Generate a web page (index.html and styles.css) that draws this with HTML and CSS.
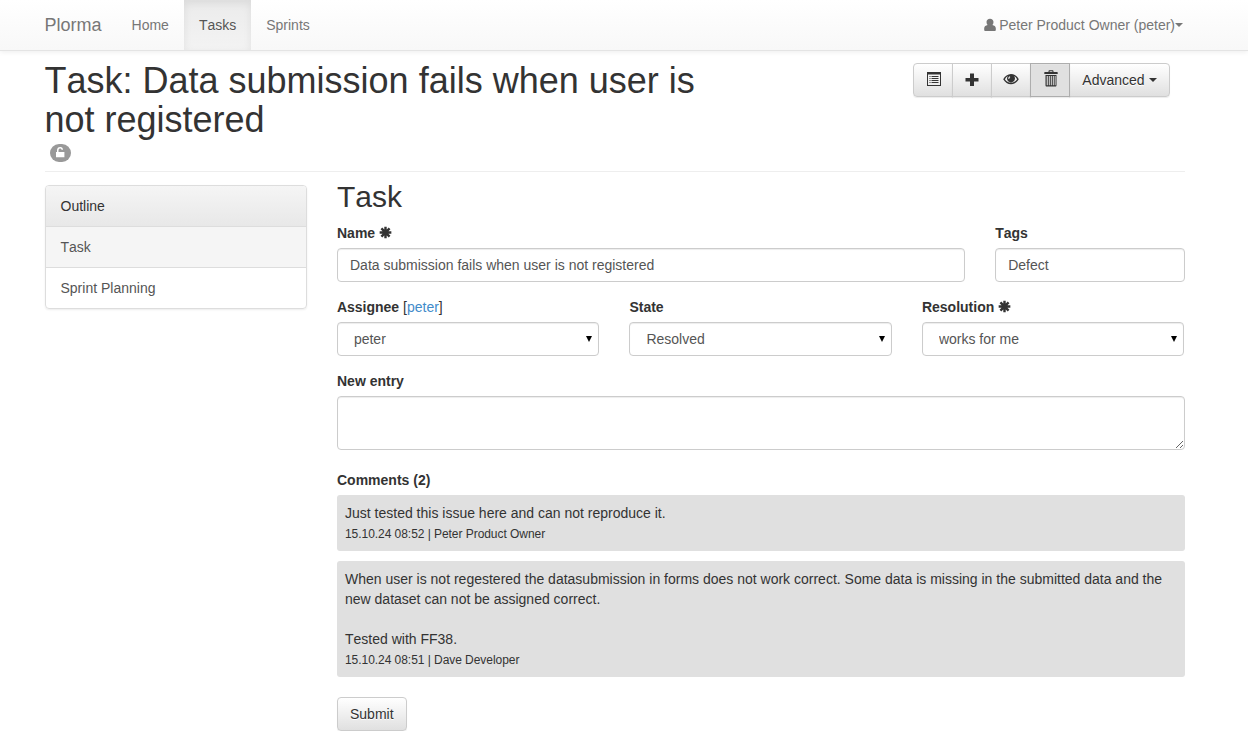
FILE: index.html
```html
<!DOCTYPE html>
<html lang="en">
<head>
<meta charset="utf-8">
<title>Plorma</title>
<link rel="stylesheet" href="styles.css">
</head>
<body>
<nav class="navbar">
  <div class="container navbar-inner">
    <a class="brand">Plorma</a>
    <a class="nav-link">Home</a>
    <a class="nav-link active">Tasks</a>
    <a class="nav-link">Sprints</a>
    <a class="nav-link user"><svg class="icon person" viewBox="0 0 12 14"><path d="M6 .7c2.100 0 3.500 1.300 3.500 3.200 0 1.300-.4 2.300-1.100 3 1.800.5 3.400 1.400 3.400 3.300V12c0 .6-.3 1-.9 1H1.100c-.6 0-.9-.4-.9-1v-1.800c0-1.900 1.600-2.800 3.400-3.300-.7-.7-1.100-1.700-1.100-3C2.500 2 3.900.7 6 .7z"/></svg> Peter Product Owner (peter)<b class="caret"></b></a>
  </div>
</nav>

<div class="container">
  <header class="page-header">
    <div class="heading">
      <h1>Task: Data submission fails when user is not registered</h1>
      <span class="badge"><svg class="icon" viewBox="0 0 12 12"><path d="M2 5h1V3.300C3 1.200 4.300 0 6.200 0S9 1.100 9 2.800H7.500C7.500 2 7 1.400 6.200 1.400s-1.700.6-1.700 1.900V5h5.900v5.300H2z"/></svg></span>
    </div>
    <div class="btn-group">
      <button class="btn"><svg class="icon raised" viewBox="0 0 14 14"><path fill-rule="evenodd" d="M0 0h14v14H0zM1 2.500V13h12V2.500z"/><path d="M2.500 4h1v1h-1zm2 0h7v1h-7zM2.500 6h1v1h-1zm2 0h7v1h-7zM2.500 8h1v1h-1zm2 0h7v1h-7zM2.500 10h1v1h-1zm2 0h7v1h-7z"/></svg></button>
      <button class="btn"><svg class="icon" viewBox="0 0 14 14"><path d="M5 .5h4V5h4.500v3.500H9V13H5V8.500H.5V5H5z"/></svg></button>
      <button class="btn"><svg class="icon" viewBox="0 0 14 14"><path fill-rule="evenodd" d="M-.8 6.200C1 3 3.800.9 7 .9s6 2.100 7.800 5.300C13 9.300 10.200 11.200 7 11.200S1 9.300-.8 6.200zm1.700 0C2.200 8.400 4.400 9.700 7 9.700s4.800-1.300 6.100-3.500c-.8-1.400-1.800-2.400-3-3.100.6.700.9 1.600.9 2.500 0 2.200-1.800 3.800-4 3.800S3 7.800 3 5.600c0-.9.3-1.800.9-2.500-1.200.7-2.200 1.700-3 3.100zM5.300 3.300c-.9.8-1.200 1.700-.9 2.800l1.200-.5c-.1-.8.200-1.300.8-1.700z"/></svg></button>
      <button class="btn pressed"><svg class="icon raised" viewBox="0 0 14 14"><path fill-rule="evenodd" d="M4.500 0V-.5c0-.8.400-1.200 1-1.200h3c.6 0 1 .4 1 1.200V0h3.700c.3 0 .5.300.5.600V2H.3V.6c0-.3.2-.6.500-.6zM5.600-.7V0h2.800v-.7zM1.500 3h11v10.200c0 .8-.4 1.300-1.200 1.300H2.700c-.8 0-1.200-.5-1.200-1.300zm1.200 1v9.300h1.100V4zm2.100 0v9.300h1V4zm2 0v9.300h1V4zm2 0v9.300h1V4zm1.900 0v9.300h.9V4z"/></svg></button>
      <button class="btn">Advanced <b class="caret"></b></button>
    </div>
  </header>

  <div class="columns">
    <aside class="outline">
      <div class="outline-head">Outline</div>
      <a class="outline-item current">Task</a>
      <a class="outline-item">Sprint Planning</a>
    </aside>

    <main class="content">
      <h2>Task</h2>
      <div class="row name-row">
        <div class="field">
          <label>Name <svg class="icon star" viewBox="0 0 14 14"><path d="M7 .7v12.600M.7 7h12.600M2.600 2.600l8.800 8.800M11.400 2.600l-8.800 8.800"/></svg></label>
          <input class="control" value="Data submission fails when user is not registered">
        </div>
        <div class="field">
          <label>Tags</label>
          <input class="control" value="Defect">
        </div>
      </div>
      <div class="row select-row">
        <div class="field">
          <label>Assignee <span class="hint">[<a class="link">peter</a>]</span></label>
          <div class="select"><select class="control"><option>peter</option></select></div>
        </div>
        <div class="field">
          <label>State</label>
          <div class="select"><select class="control"><option>Resolved</option></select></div>
        </div>
        <div class="field">
          <label>Resolution <svg class="icon star" viewBox="0 0 14 14"><path d="M7 .7v12.600M.7 7h12.600M2.600 2.600l8.800 8.800M11.400 2.600l-8.800 8.800"/></svg></label>
          <div class="select"><select class="control"><option>works for me</option></select></div>
        </div>
      </div>
      <div class="field entry">
        <label>New entry</label>
        <textarea class="control"></textarea>
      </div>
      <label>Comments (2)</label>
      <div class="comment">
        <div>Just tested this issue here and can not reproduce it.</div>
        <div class="meta">15.10.24 08:52 | Peter Product Owner</div>
      </div>
      <div class="comment">
        <div>When user is not regestered the datasubmission in forms does not work correct. Some data is missing in the submitted data and the new dataset can not be assigned correct.<br><br>Tested with FF38.</div>
        <div class="meta">15.10.24 08:51 | Dave Developer</div>
      </div>
      <button class="btn submit">Submit</button>
    </main>
  </div>
</div>
</body>
</html>
```

FILE: styles.css
```css
* { box-sizing: border-box; }

body {
  margin: 0;
  background: #fff;
  color: #333;
  font: 14px/20px "Liberation Sans", Arial, sans-serif;
  font-kerning: none;
  overflow: hidden;
}

.container {
  width: 1140px;
  margin-left: 44.5px;
}

.icon {
  display: inline-block;
  width: 14px;
  height: 14px;
  fill: currentColor;
  vertical-align: -2px;
  overflow: visible;
}
.icon.raised { margin: 0 -.5px 0 .5px; vertical-align: -1px; }
.icon.person { width: 12px; margin-right: -1px; }

.caret {
  display: inline-block;
  border-top: 4px solid;
  border-left: 4px solid transparent;
  border-right: 4px solid transparent;
  vertical-align: 3px;
}

/* Navigation */
.navbar {
  height: 51px;
  border-bottom: 1px solid #e4e4e4;
  background: linear-gradient(#fff, #f8f8f8);
  box-shadow: 0 1px 5px rgba(0, 0, 0, .075);
}
.navbar-inner { display: flex; }
.brand {
  padding: 15px 15px 15px 0;
  font-size: 18px;
  color: #777;
}
.nav-link {
  height: 50px;
  padding: 15px;
  color: #777;
  text-shadow: 0 1px 0 rgba(255, 255, 255, .25);
}
.nav-link.active {
  color: #555;
  background: linear-gradient(#ebebeb, #f3f3f3);
  box-shadow: inset 0 3px 9px rgba(0, 0, 0, .075);
}
.nav-link.user {
  margin-left: auto;
  padding-right: 1.5px;
}

/* Heading */
.page-header {
  display: flex;
  justify-content: space-between;
  align-items: flex-start;
  height: 121px;
  padding-top: 10px;
  border-bottom: 1px solid #eee;
}
.heading { width: 652.5px; }
h1 {
  margin: 0;
  font-size: 36px;
  font-weight: 500;
  line-height: 39px;
}
.badge {
  display: block;
  width: 21px;
  height: 18px;
  margin: 5px 0 0 5px;
  padding: 3px 4.5px;
  border-radius: 10px;
  background: #999;
  color: #fff;
  line-height: 0;
}
.badge .icon { width: 12px; height: 12px; }

.btn-group {
  display: flex;
  margin: 2px 15px 0 0;
}
.btn {
  height: 34px;
  margin: 0;
  padding: 6px 12px;
  border: 1px solid #ccc;
  border-radius: 4px;
  background: linear-gradient(#fff, #e0e0e0);
  box-shadow: inset 0 1px 0 rgba(255, 255, 255, .15), 0 1px 1px rgba(0, 0, 0, .075);
  color: #333;
  font: inherit;
  font-kerning: none;
  text-shadow: 0 1px 0 #fff;
}
.btn-group .btn { border-radius: 0; }
.btn-group .btn + .btn { margin-left: -1px; }
.btn-group .btn:first-child { border-radius: 4px 0 0 4px; }
.btn-group .btn:last-child { border-radius: 0 4px 4px 0; }
.btn-group .pressed {
  z-index: 1;
  border-color: #adadad;
  background: #e0e0e0;
}

/* Columns */
.columns {
  display: grid;
  grid-template-columns: 262.5px 847.5px;
  gap: 30px;
  align-items: start;
}
.outline {
  margin-top: 13px;
  border: 1px solid #ddd;
  border-radius: 4px;
  box-shadow: 0 1px 2px rgba(0, 0, 0, .075);
  overflow: hidden;
}
.outline-head {
  padding: 10px 15px;
  background: linear-gradient(#f5f5f5, #e8e8e8);
}
.outline-item {
  display: block;
  padding: 10px 15px;
  border-top: 1px solid #ddd;
  color: #555;
}
.outline-item.current { background: #f5f5f5; }

/* Form */
h2 {
  margin: 8px 0 10px;
  font-size: 30px;
  font-weight: 500;
  line-height: 33px;
}
.row {
  display: grid;
  gap: 30px;
  margin-bottom: 15px;
}
.name-row { grid-template-columns: 628.125px 189.375px; }
.select-row {
  grid-template-columns: repeat(3, 262.5px);
  margin-left: -.1px;
}
label {
  display: block;
  height: 20px;
  margin-bottom: 5px;
  font-weight: bold;
}
.hint { font-weight: normal; }
.link { color: #428bca; }
.icon.star {
  width: 13px;
  height: 13px;
  fill: none;
  stroke: currentColor;
  stroke-width: 2.6;
  vertical-align: -1px;
}
.control {
  display: block;
  width: 100%;
  height: 34px;
  margin: 0;
  padding: 6px 12px;
  border: 1px solid #ccc;
  border-radius: 4px;
  background: #fff;
  box-shadow: inset 0 1px 1px rgba(0, 0, 0, .075);
  color: #555;
  font: inherit;
}
textarea.control { height: 54px; resize: vertical; }
.select { position: relative; }
.select .control { appearance: none; padding-left: 16px; }
.select::after {
  content: "";
  position: absolute;
  top: 14px;
  right: 7px;
  border-top: 6px solid #000;
  border-left: 3px solid transparent;
  border-right: 3px solid transparent;
}
.entry { margin-bottom: 20px; }

.comment {
  margin-bottom: 10px;
  padding: 8px;
  border-radius: 3px;
  background: #e0e0e0;
}
.meta {
  padding-top: 2px;
  font-size: 12px;
  line-height: 18px;
  letter-spacing: -.05px;
}
.submit { margin-top: 10px; }
```
